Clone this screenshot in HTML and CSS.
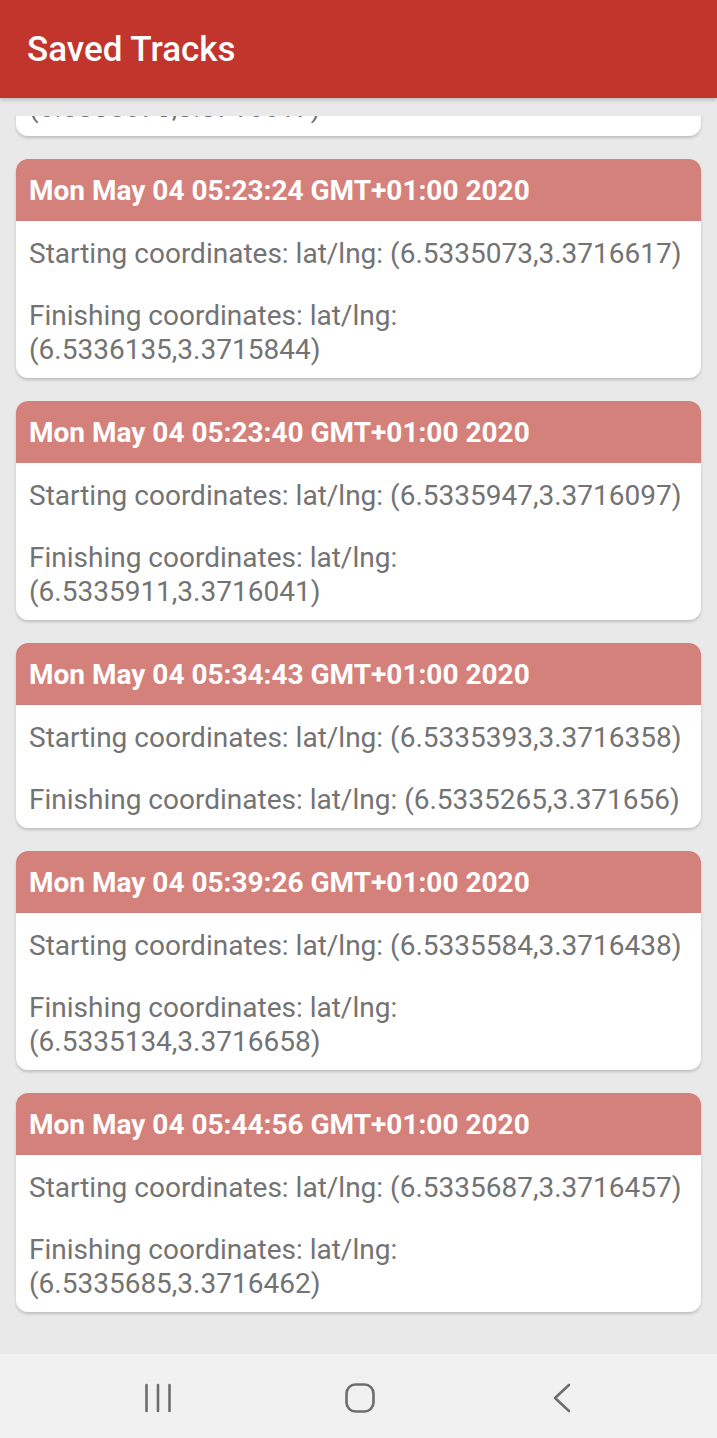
FILE: index.html
```html
<!DOCTYPE html>
<html>
<head>
<meta charset="utf-8">
<link rel="stylesheet" href="styles.css">
</head>
<body>
<div class="screen">
  <header class="appbar"><h1 class="title">Saved Tracks</h1></header>
  <main class="list">
    <div class="card card-partial">
      <div class="card-head">Mon May 04 05:20:11 GMT+01:00 2020</div>
      <div class="card-body">
        <p class="line">Starting coordinates: lat/lng: (6.5335120,3.3716590)</p>
        <p class="line">Finishing coordinates: lat/lng: (6.5335073,3.3716617)</p>
      </div>
    </div>
    <div class="card">
      <div class="card-head">Mon May 04 05:23:24 GMT+01:00 2020</div>
      <div class="card-body">
        <p class="line">Starting coordinates: lat/lng: (6.5335073,3.3716617)</p>
        <p class="line">Finishing coordinates: lat/lng: (6.5336135,3.3715844)</p>
      </div>
    </div>
    <div class="card">
      <div class="card-head">Mon May 04 05:23:40 GMT+01:00 2020</div>
      <div class="card-body">
        <p class="line">Starting coordinates: lat/lng: (6.5335947,3.3716097)</p>
        <p class="line">Finishing coordinates: lat/lng: (6.5335911,3.3716041)</p>
      </div>
    </div>
    <div class="card">
      <div class="card-head">Mon May 04 05:34:43 GMT+01:00 2020</div>
      <div class="card-body">
        <p class="line">Starting coordinates: lat/lng: (6.5335393,3.3716358)</p>
        <p class="line">Finishing coordinates: lat/lng: (6.5335265,3.371656)</p>
      </div>
    </div>
    <div class="card">
      <div class="card-head">Mon May 04 05:39:26 GMT+01:00 2020</div>
      <div class="card-body">
        <p class="line">Starting coordinates: lat/lng: (6.5335584,3.3716438)</p>
        <p class="line">Finishing coordinates: lat/lng: (6.5335134,3.3716658)</p>
      </div>
    </div>
    <div class="card">
      <div class="card-head">Mon May 04 05:44:56 GMT+01:00 2020</div>
      <div class="card-body">
        <p class="line">Starting coordinates: lat/lng: (6.5335687,3.3716457)</p>
        <p class="line">Finishing coordinates: lat/lng: (6.5335685,3.3716462)</p>
      </div>
    </div>
  </main>
  <nav class="navbar">
    <svg class="nav-icon" width="40" height="40" viewBox="0 0 40 40"><g stroke="#6e6e6e" stroke-width="2.6" stroke-linecap="round"><line x1="8.5" y1="7" x2="8.5" y2="33"/><line x1="20" y1="7" x2="20" y2="33"/><line x1="31.5" y1="7" x2="31.5" y2="33"/></g></svg>
    <svg class="nav-icon" width="40" height="40" viewBox="0 0 40 40"><rect x="6.5" y="6.5" width="27" height="27" rx="9" fill="none" stroke="#6e6e6e" stroke-width="2.6"/></svg>
    <svg class="nav-icon" width="40" height="40" viewBox="0 0 40 40"><polyline points="27,7 13,20 27,33" fill="none" stroke="#6e6e6e" stroke-width="2.6" stroke-linecap="round" stroke-linejoin="round"/></svg>
  </nav>
</div>
</body>
</html>
```

FILE: styles.css
```css
* { box-sizing: border-box; }
html, body { margin: 0; padding: 0; }
body {
  font-family: Roboto, "Noto Sans", sans-serif;
  background: #e9e9e9;
}
.screen {
  width: 717px;
  height: 1438px;
  display: flex;
  flex-direction: column;
  overflow: hidden;
}
.appbar {
  height: 98px;
  flex: none;
  background: #c1352d;
  display: flex;
  align-items: center;
  padding-left: 27px;
  box-shadow: 0 2px 4px rgba(0,0,0,0.2);
  position: relative;
  z-index: 2;
}
.title {
  margin: 0;
  color: #fff;
  font-size: 35px;
  font-weight: 500;
  letter-spacing: 0;
}
.list {
  flex: 1;
  margin-top: 18px;
  overflow: hidden;
  padding: 0 16px;
  display: flex;
  flex-direction: column;
  gap: 23px;
}
.card {
  flex: none;
  background: #fff;
  border-radius: 12px;
  overflow: hidden;
  box-shadow: 0 2px 3px rgba(0,0,0,0.18);
}
.card-partial {
  margin-top: -199px;
}
.card-head {
  height: 62px;
  background: #d5817b;
  color: #fff;
  font-weight: 700;
  font-size: 28px;
  padding-left: 13px;
  display: flex;
  align-items: center;
}
.card-body {
  padding: 16px 12px 11px 13px;
  display: flex;
  flex-direction: column;
  gap: 28px;
}
.line {
  margin: 0;
  color: #737373;
  font-size: 28px;
  line-height: 34px;
}
.navbar {
  height: 84px;
  flex: none;
  background: #f1f1f1;
  display: flex;
  justify-content: center;
  align-items: center;
  gap: 162px;
  padding-left: 2px;
}
.nav-icon { display: block; margin-top: 4px; }
```
